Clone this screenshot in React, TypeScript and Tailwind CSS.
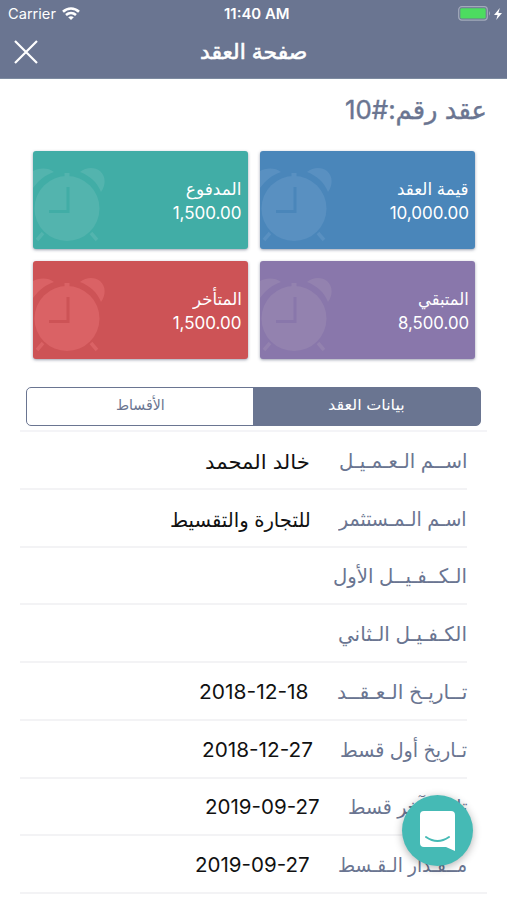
import { useLayoutEffect, useRef, useState } from 'react';

type FitProps = { text: string; width: number; className?: string; dir?: 'rtl' | 'ltr' };

// Single line of text squeezed or stretched to a fixed width
function Fit({ text, width, className = '', dir = 'rtl' }: FitProps) {
  const ref = useRef<HTMLSpanElement>(null);
  const [scale, setScale] = useState<number>(1);

  useLayoutEffect(() => {
    if (ref.current) setScale(width / ref.current.offsetWidth);
  }, [text, width]);

  return (
    <span dir="rtl" className={`flex shrink-0 justify-start ${className}`} style={{ width }}>
      <span
        ref={ref}
        dir={dir}
        className="block shrink-0 origin-right whitespace-nowrap"
        style={{ transform: `scaleX(${scale})` }}
      >
        {text}
      </span>
    </span>
  );
}

const CARDS = [
  { label: 'قيمة العقد', labelWidth: 72, value: '10,000.00', valueWidth: 79, bg: 'bg-[#4a86ba]', ink: 'text-[#5990c1]', hand: 'stroke-[#4a86ba]' },
  { label: 'المدفوع', labelWidth: 56, value: '1,500.00', valueWidth: 69, bg: 'bg-[#41ada6]', ink: 'text-[#53b4ae]', hand: 'stroke-[#41ada6]' },
  { label: 'المتبقي', labelWidth: 51, value: '8,500.00', valueWidth: 71, bg: 'bg-[#8977ab]', ink: 'text-[#9382af]', hand: 'stroke-[#8977ab]' },
  { label: 'المتأخر', labelWidth: 49, value: '1,500.00', valueWidth: 69, bg: 'bg-[#cd5356]', ink: 'text-[#da6265]', hand: 'stroke-[#cd5356]' },
];

const ROWS = [
  { label: 'اســم الـعـمـيـل', labelWidth: 128, value: 'خالد المحمد', valueWidth: 105, gap: 'ms-[29px]' },
  { label: 'اسـم الـمـستثمر', labelWidth: 128, value: 'للتجارة والتقسيط', valueWidth: 141, gap: 'ms-[28px]' },
  { label: 'الـكــفـيــل الأول', labelWidth: 134, value: '', valueWidth: 0, gap: '' },
  { label: 'الكـفـيـل الـثاني', labelWidth: 129, value: '', valueWidth: 0, gap: '' },
  { label: 'تــاريـخ الـعـقــد', labelWidth: 130, value: '2018-12-18', valueWidth: 110, gap: 'ms-[28px]' },
  { label: 'تـاريخ أول قسط', labelWidth: 127, value: '2018-12-27', valueWidth: 111, gap: 'ms-[27px]' },
  { label: 'تاريخ آخر قسط', labelWidth: 119, value: '2019-09-27', valueWidth: 115, gap: 'ms-[28px]' },
  { label: 'مــقـدار الـقـسط', labelWidth: 129, value: '2019-09-27', valueWidth: 115, gap: 'ms-[28px]' },
];

function AlarmClock({ className, hand }: { className: string; hand: string }) {
  return (
    <svg viewBox="0 0 72 76" className={`h-[76px] w-[72px] ${className}`} fill="currentColor">
      <path d="M0 20V3C5 0 15-1 21 4C12 7 6 12 0 20Z" />
      <path d="M47 4C53-1 62-1 67 3C73 8 73 17 68 24C64 14 57 8 47 4Z" />
      <circle cx="34" cy="40.5" r="32.5" />
      <rect x="31.5" y="5" width="5" height="5" />
      <path d="M10 65L4 72M58 65L64 72" stroke="currentColor" strokeWidth="3.5" />
      <path d="M35 19V43.500H16" fill="none" strokeWidth="3" className={hand} />
    </svg>
  );
}

function StatusBar() {
  return (
    <div dir="ltr" className="grid h-[27px] grid-cols-3 items-center text-[14px] leading-none">
      <div className="flex items-center gap-[6px] ps-[8px]">
        <Fit text="Carrier" width={48} dir="ltr" />
        <svg viewBox="0 0 18 13" className="h-[13px] w-[18px]" fill="none" stroke="white" strokeWidth="2.6">
          <path d="M1 4.7C5.6.4 12.4.4 17 4.7" />
          <path d="M4 8C7 5.400 11 5.400 14 8" />
          <path d="M9 13L6.2 10.3Q9 8 11.8 10.3Z" fill="white" stroke="none" />
        </svg>
      </div>
      <div className="flex justify-center ps-[5px] font-semibold">
        <Fit text="11:40 AM" width={66} dir="ltr" />
      </div>
      <div className="flex items-center justify-end gap-[3px] pe-[5px]">
        <svg viewBox="0 0 33 15" className="h-[15px] w-[33px]">
          <rect x=".7" y=".7" width="28.6" height="13.4" rx="3" fill="none" stroke="#a3aabb" strokeWidth="1.2" />
          <rect x="2.3" y="2.3" width="25.4" height="10.2" rx="1.3" fill="#4cdc60" />
          <path d="M31 5Q33 7.4 31 9.8Z" fill="#a3aabb" />
        </svg>
        <svg viewBox="0 0 8 12" className="h-[12px] w-[8px]" fill="white">
          <path d="M5.8 0L0 7H3.6L2.2 12L8 5H4.4Z" />
        </svg>
      </div>
    </div>
  );
}

export default function App() {
  return (
    <div
      dir="rtl"
      className="relative h-[900px] w-[507px] overflow-hidden bg-white font-['Inter','DejaVu_Sans',sans-serif] text-[#6a7591]"
    >
      <header className="h-[79px] border-b border-[#7d8ba0] bg-[#6a7591] text-white">
        <StatusBar />
        <div className="relative flex h-[50px] items-center justify-center text-[21px] [-webkit-text-stroke:0.6px_white]">
          <Fit text="صفحة العقد" width={107} />
          <button type="button" aria-label="إغلاق" className="absolute left-[14px] top-[13px]">
            <svg viewBox="0 0 24 24" className="size-[24px]" stroke="white" strokeWidth="2.2">
              <path d="M1 1L23 23M23 1L1 23" />
            </svg>
          </button>
        </div>
      </header>

      <h1 className="flex h-[72px] px-[20px] pt-[13px] text-[26px] leading-[36px] [-webkit-text-stroke:0.4px_#6a7591]">
        <Fit text="عقد رقم:#10" width={142} />
      </h1>

      <section className="grid grid-cols-[215px_215px] gap-x-[12.5px] gap-y-[12px] ps-[32px]">
        {CARDS.map((c) => (
          <article
            key={c.label}
            className={`relative h-[98px] overflow-hidden rounded-[3px] ps-[6px] pt-[26px] text-white shadow-[0_1px_3px_rgba(60,70,100,0.5)] ${c.bg}`}
          >
            <div className={`absolute left-0 top-[17px] ${c.ink}`}>
              <AlarmClock className={c.ink} hand={c.hand} />
            </div>
            <div className="relative flex flex-col">
              <Fit text={c.label} width={c.labelWidth} className="text-[17px] leading-[24px]" />
              <Fit text={c.value} width={c.valueWidth} dir="ltr" className="text-[17px] leading-[24px]" />
            </div>
          </article>
        ))}
      </section>

      <div className="mx-[26px] mt-[28px] flex h-[39px] overflow-hidden rounded-[5px] border border-[#6a7591] pb-[2px] text-[15px] [background:linear-gradient(to_left,#6a7591_50%,white_50%)]">
        <button type="button" className="flex flex-1 items-center justify-center text-white">
          <Fit text="بيانات العقد" width={77} />
        </button>
        <button type="button" className="flex flex-1 items-center justify-center">
          <Fit text="الأقساط" width={49} />
        </button>
      </div>

      <div className="mx-[20px] mt-[4px] border-t-2 border-[#f4f4f7]">
        {ROWS.map((r, i) => (
          <div
            key={r.label}
            className={`flex h-[57.75px] items-center border-b-2 border-[#f3f3f5] pt-[2px] ${i === ROWS.length - 1 ? 'ps-[20px]' : 'ms-[20px]'}`}
          >
            <Fit text={r.label} width={r.labelWidth} className="text-[20px]" />
            {r.value && (
              <Fit
                text={r.value}
                width={r.valueWidth}
                dir={r.value.startsWith('2') ? 'ltr' : 'rtl'}
                className={`text-[20px] text-[#111] ${r.value.startsWith('2') ? '' : 'pt-[2px]'} ${r.gap}`}
              />
            )}
          </div>
        ))}
      </div>

      <button
        type="button"
        aria-label="محادثة"
        className="absolute left-[402px] top-[795px] flex size-[71px] items-center justify-center rounded-full bg-[#45bab5] shadow-[0_2px_8px_rgba(0,0,0,0.3)]"
      >
        <svg viewBox="0 0 35 40" className="h-[40px] w-[35px]">
          <path d="M4 0H31Q35 0 35 4V40L26 36H4Q0 36 0 32V4Q0 0 4 0Z" fill="white" />
          <path d="M6 26Q17.500 34 29 26" fill="none" stroke="#45bab5" strokeWidth="2" strokeLinecap="round" />
        </svg>
      </button>
    </div>
  );
}
